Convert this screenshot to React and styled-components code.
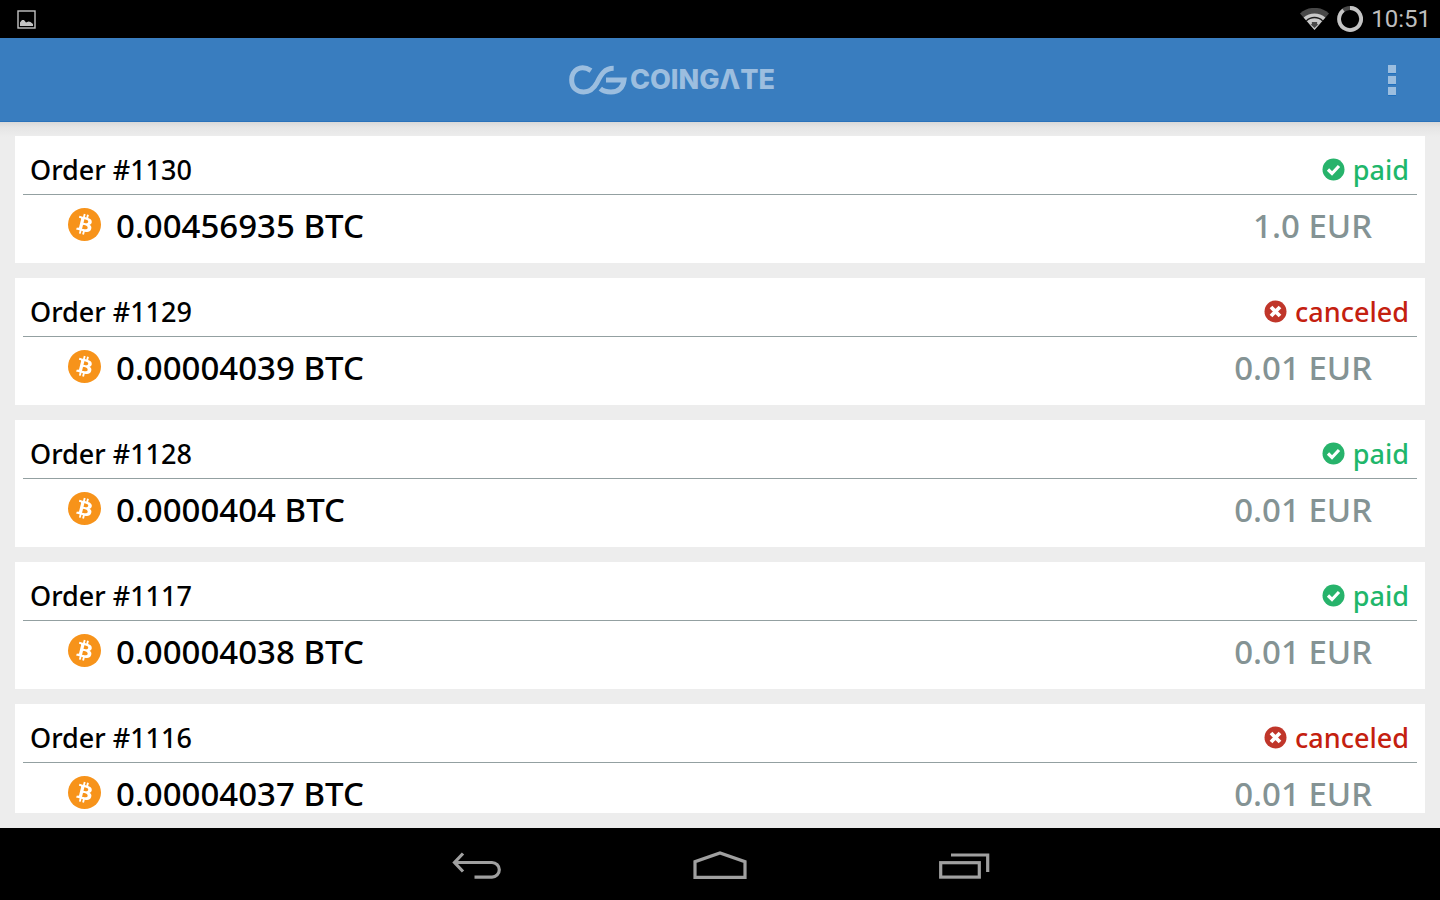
import React from 'react';
import styled, { createGlobalStyle } from 'styled-components';

const GlobalStyle = createGlobalStyle`
  * {
    box-sizing: border-box;
  }

  body {
    margin: 0;
    background-color: #ededed;
    font-family: 'Noto Sans', 'Open Sans', sans-serif;
  }
`;

const Screen = styled.div`
  display: flex;
  flex-direction: column;
  height: 100vh;
  overflow: hidden;
`;

const StatusBar = styled.div`
  display: flex;
  flex-shrink: 0;
  align-items: center;
  justify-content: space-between;
  height: 38px;
  padding: 0 9px 0 17px;
  background-color: #000;
`;

const StatusIcons = styled.div`
  display: flex;
  align-items: center;
  gap: 8px;

  svg {
    display: block;
  }
`;

const Clock = styled.time`
  color: #bebebe;
  font-family: Roboto, sans-serif;
  font-size: 24px;
  line-height: 38px;
`;

const AppBar = styled.header`
  display: flex;
  flex-shrink: 0;
  align-items: center;
  height: 84px;
  background-color: #397dbf;
  border-bottom: 1px solid #2a72ba;
`;

const Brand = styled.a`
  display: flex;
  flex: 1;
  align-items: center;
  justify-content: center;
  gap: 3px;
  color: #9cbedf;
  text-decoration: none;
`;

const Wordmark = styled.span`
  font-family: Inter, sans-serif;
  font-size: 27px;
  font-weight: 800;
  line-height: 32px;
`;

const MenuButton = styled.button`
  display: flex;
  flex-direction: column;
  align-items: center;
  justify-content: center;
  gap: 3px;
  width: 96px;
  height: 100%;
  padding: 0;
  border: 0;
  background: none;
`;

const Dot = styled.span`
  width: 8px;
  height: 8px;
  background-color: #9cbedf;
  box-shadow: 0 1px 0 #1f6fbd;
`;

const Content = styled.main`
  display: flex;
  flex: 1;
  flex-direction: column;
  min-height: 0;
  padding: 14px 15px 15px;
  background: linear-gradient(#d8d8d8, #e5e5e5 5px, #ededed 15px);
`;

const OrderList = styled.ul`
  display: flex;
  flex: 1;
  flex-direction: column;
  gap: 15px;
  min-height: 0;
  margin: 0;
  padding: 0;
  overflow: hidden;
  list-style: none;
`;

const Card = styled.li`
  flex-shrink: 0;
  height: 127px;
  padding: 0 8px;
  background-color: #fff;
`;

const CardHead = styled.div`
  display: flex;
  align-items: center;
  justify-content: space-between;
  height: 59px;
  padding: 9px 8px 0 7px;
  border-bottom: 1px solid #93a0a1;
`;

const OrderName = styled.h2`
  margin: 0;
  color: #000;
  font-size: 27px;
  font-weight: 500;
  line-height: 36px;
`;

const Status = styled.span`
  display: flex;
  align-items: center;
  gap: 8px;
  color: ${({ $paid }) => ($paid ? '#1fb76b' : '#c4200f')};
  font-size: 27px;
  font-weight: 500;
  line-height: 36px;
`;

const CardBody = styled.div`
  display: flex;
  align-items: center;
  justify-content: space-between;
  height: 62px;
  padding: 0 45px;
`;

const Amount = styled.span`
  display: flex;
  align-items: flex-start;
  gap: 15px;
  color: #000;
  font-size: 33px;
  font-weight: 500;
  line-height: 36px;
`;

const Price = styled.span`
  color: #849394;
  font-size: 33px;
  font-weight: 500;
  line-height: 36px;
`;

const NavBar = styled.nav`
  display: flex;
  flex-shrink: 0;
  justify-content: center;
  gap: 148px;
  height: 72px;
  background-color: #000;
`;

const NavButton = styled.button`
  display: flex;
  align-items: center;
  justify-content: center;
  width: 96px;
  height: 72px;
  padding: 4px 0 0;
  border: 0;
  background: none;
`;

const orders = [
  { id: 1130, btc: '0.00456935', eur: '1.0', status: 'paid' },
  { id: 1129, btc: '0.00004039', eur: '0.01', status: 'canceled' },
  { id: 1128, btc: '0.0000404', eur: '0.01', status: 'paid' },
  { id: 1117, btc: '0.00004038', eur: '0.01', status: 'paid' },
  { id: 1116, btc: '0.00004037', eur: '0.01', status: 'canceled' },
];

const PictureIcon = () => (
  <svg width="19" height="19" viewBox="0 0 19 19">
    <rect x="1" y="1" width="17" height="17" fill="none" stroke="#c4c4c4" strokeWidth="1.4" />
    <path d="M3 16v-3.500l2-2.500h2l2 2.500 2.500-1 2 .5 2.500 2v2z" fill="#c4c4c4" />
  </svg>
);

const WifiIcon = () => (
  <svg width="29" height="22" viewBox="0 0 88 66">
    <path d="M44 66L0 16A66 66 0 0 1 88 16z" fill="#484848" />
    <path d="M44 66L11 28.500A50 50 0 0 1 77 28.500z" fill="#c8c8c8" />
    <path d="M19 39A35 35 0 0 1 69 39" fill="none" stroke="#1c1c1c" strokeWidth="4" />
    <path d="M36 42h16v7h4L44 60 32 49h4z" fill="#484848" />
  </svg>
);

const BatteryIcon = () => (
  <svg width="26" height="26" viewBox="0 0 26 26">
    <circle cx="13" cy="13" r="11" fill="none" stroke="#484848" strokeWidth="3.800" />
    <path d="M13 2A11 11 0 1 1 6.500 4.200" fill="none" stroke="#c4c4c4" strokeWidth="3.800" />
  </svg>
);

const LogoMark = () => (
  <svg width="58" height="30" viewBox="0 0 174 90" fill="none" stroke="currentColor" strokeWidth="15">
    <path d="M66 17C34-4 8 17 8 45C8 69 25 81 44 81C64 81 75 70 84 53C94 33 104 10 134 10" />
    <path d="M94 71C103 79 113 81 126 81C149 81 162 67 165 45H111" />
  </svg>
);

const PaidIcon = () => (
  <svg width="23" height="23" viewBox="0 0 23 23">
    <circle cx="11.500" cy="11.500" r="11" fill="#27b36b" />
    <path d="M6 11.500l4 4 7-7.500" fill="none" stroke="#fff" strokeWidth="3.200" />
  </svg>
);

const CanceledIcon = () => (
  <svg width="23" height="23" viewBox="0 0 23 23">
    <circle cx="11.500" cy="11.500" r="11" fill="#c0362a" />
    <path d="M7 7l9 9M16 7l-9 9" fill="none" stroke="#fff" strokeWidth="3.800" />
  </svg>
);

const BitcoinIcon = () => (
  <svg width="33" height="33" viewBox="0 0 64 64">
    <circle cx="32" cy="32" r="32" fill="#f7931a" />
    <path
      fill="#fff"
      d="M46.100 27.440c.637-4.258-2.605-6.547-7.038-8.074l1.438-5.768-3.511-.875-1.400 5.616c-.923-.23-1.871-.447-2.813-.662l1.410-5.653-3.509-.875-1.439 5.766c-.764-.174-1.514-.346-2.242-.527l.004-.018-4.842-1.209-.934 3.750s2.605.597 2.550.634c1.422.355 1.679 1.296 1.636 2.042l-1.638 6.571c.098.025.225.061.365.117l-.371-.092-2.296 9.205c-.174.432-.615 1.080-1.609.834.035.051-2.552-.637-2.552-.637l-1.743 4.019 4.569 1.139c.850.213 1.683.436 2.503.646l-1.453 5.834 3.507.875 1.439-5.772c.958.260 1.888.500 2.798.726l-1.434 5.745 3.511.875 1.453-5.823c5.987 1.133 10.489.676 12.384-4.739 1.527-4.360-.076-6.875-3.226-8.515 2.294-.529 4.022-2.038 4.483-5.155zM38.080 38.690c-1.085 4.360-8.426 2.003-10.806 1.412l1.928-7.729c2.380.594 10.012 1.770 8.878 6.317zm1.086-11.312c-.990 3.966-7.100 1.951-9.082 1.457l1.748-7.010c1.982.494 8.365 1.416 7.334 5.553z"
    />
  </svg>
);

const BackIcon = () => (
  <svg width="50" height="28" viewBox="0 0 50 28" fill="none" stroke="#a0a0a0" strokeWidth="3.200">
    <path d="M3 10.500H41A7.300 7.300 0 0 1 41 25.100H23.500" />
    <path d="M12 1.500L3.500 10.500L12 19.500" />
  </svg>
);

const HomeIcon = () => (
  <svg width="54" height="30" viewBox="0 0 54 30" fill="none" stroke="#a0a0a0" strokeWidth="3.200">
    <path d="M2 26.300V10.700L27 2L52 10.700V26.300z" />
  </svg>
);

const RecentIcon = () => (
  <svg width="52" height="28" viewBox="0 0 52 28" fill="none" stroke="#a0a0a0" strokeWidth="3.200">
    <rect x="2.700" y="10.700" width="38.600" height="14.400" />
    <path d="M13 3H49.700V20" />
  </svg>
);

const Order = ({ id, btc, eur, status }) => (
  <Card>
    <CardHead>
      <OrderName>Order #{id}</OrderName>
      <Status $paid={status === 'paid'}>
        {status === 'paid' ? <PaidIcon /> : <CanceledIcon />}
        {status}
      </Status>
    </CardHead>
    <CardBody>
      <Amount>
        <BitcoinIcon />
        {btc} BTC
      </Amount>
      <Price>{eur} EUR</Price>
    </CardBody>
  </Card>
);

const App = () => (
  <>
    <GlobalStyle />
    <Screen>
      <StatusBar>
        <PictureIcon />
        <StatusIcons>
          <WifiIcon />
          <BatteryIcon />
          <Clock>10:51</Clock>
        </StatusIcons>
      </StatusBar>
      <AppBar>
        <Brand href="#" aria-label="COINGATE">
          <LogoMark />
          <Wordmark>COINGΛTE</Wordmark>
        </Brand>
        <MenuButton type="button" aria-label="More options">
          <Dot />
          <Dot />
          <Dot />
        </MenuButton>
      </AppBar>
      <Content>
        <OrderList>
          {orders.map(order => (
            <Order key={order.id} {...order} />
          ))}
        </OrderList>
      </Content>
      <NavBar>
        <NavButton type="button" aria-label="Back">
          <BackIcon />
        </NavButton>
        <NavButton type="button" aria-label="Home">
          <HomeIcon />
        </NavButton>
        <NavButton type="button" aria-label="Recent apps">
          <RecentIcon />
        </NavButton>
      </NavBar>
    </Screen>
  </>
);

export default App;
